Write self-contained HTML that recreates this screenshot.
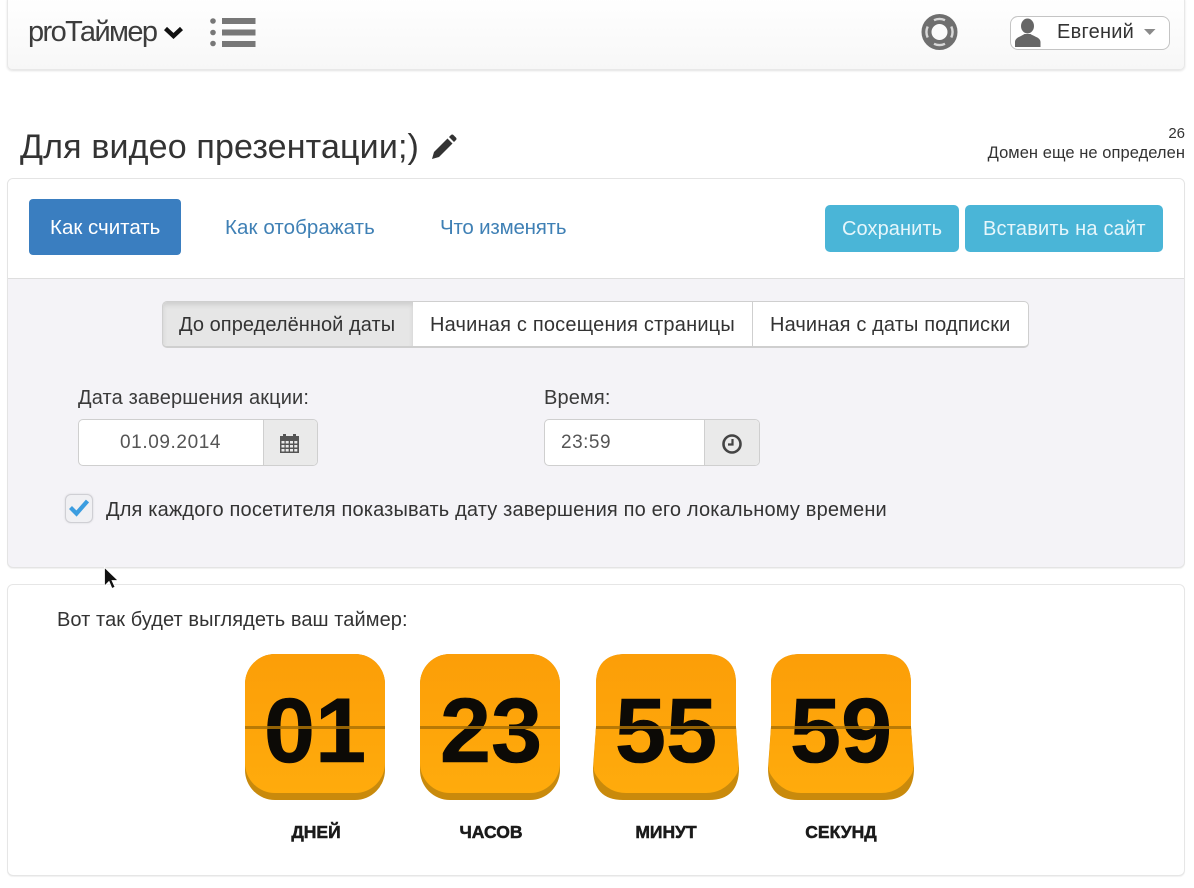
<!DOCTYPE html>
<html lang="ru"><head><meta charset="utf-8"><title>proТаймер</title>
<style>
html,body{margin:0;padding:0;background:#fff}
#p{position:relative;width:1194px;height:888px;overflow:hidden;background:#fff;font-family:"Liberation Sans",sans-serif;color:#333}
#p div,#p span.t,#p svg.a{position:absolute}
.t{position:absolute;white-space:nowrap;line-height:1}
.box{box-sizing:border-box}
</style></head><body><div id="p">

<div class="box" style="left:7px;top:-4px;width:1178px;height:74px;border:1px solid #e8e8e8;border-radius:5px;background:linear-gradient(#fff,#f7f7f7);box-shadow:0 1px 2px rgba(0,0,0,.12)"></div>
<span class="t" style="left:28px;top:18px;font-size:29px;letter-spacing:-1.6px;color:#3c3c3c">proТаймер</span>
<svg class="a" style="left:163px;top:24px" width="21" height="15" viewBox="0 0 21 15"><path d="M2.500 4.500L10.500 12L18.500 4.500" fill="none" stroke="#111" stroke-width="4.400"/></svg>
<svg class="a" style="left:208px;top:16px" width="50" height="33" viewBox="0 0 50 33"><g fill="#777"><circle cx="5" cy="5" r="2.800"/><circle cx="5" cy="16.500" r="2.800"/><circle cx="5" cy="27.500" r="2.800"/><rect x="14" y="2" width="33.500" height="6"/><rect x="14" y="13.500" width="33.500" height="6"/><rect x="14" y="25" width="33.500" height="6"/></g></svg>
<svg class="a" style="left:920px;top:13px" width="40" height="40" viewBox="0 0 40 40"><circle cx="19.500" cy="19" r="13" fill="none" stroke="#6f6f6f" stroke-width="10"/><g fill="none" stroke="#d8d8d8" stroke-width="2.400"><path d="M14 7.200A13 13 0 0 1 25 7.200"/><path d="M14 30.800A13 13 0 0 0 25 30.800"/><path d="M7.700 13.500A13 13 0 0 0 7.700 24.500"/><path d="M31.300 13.500A13 13 0 0 1 31.300 24.500"/></g></svg>
<div class="box" style="left:1010px;top:16px;width:160px;height:34px;border:1px solid #c4c4c4;border-radius:8px;background:#fff"></div>
<svg class="a" style="left:1012px;top:17px" width="32" height="32" viewBox="0 0 32 32"><ellipse cx="15.500" cy="9" rx="6.500" ry="7.500" fill="#666"/><path fill="#666" d="M3 30V25C3 20.500 9 19.500 12.500 17L18.500 17C22 19.500 28.500 20.500 28.500 25V30Z"/></svg>
<span class="t" style="left:1057px;top:22px;font-size:20px;letter-spacing:.25px;color:#333">Евгений</span>
<svg class="a" style="left:1143px;top:28px" width="14" height="8" viewBox="0 0 14 8"><path d="M1 1H12.500L6.750 7z" fill="#8a8a8a"/></svg>

<span class="t" style="left:20px;top:130px;font-size:34px;letter-spacing:.15px;color:#333">Для видео презентации;)</span>
<svg class="a" style="left:430px;top:133px" width="28" height="28" viewBox="0 0 28 28"><path fill="#333" d="M2 26l2-7L17.500 5.500l5 5L9 24zM19 4l2-2c.7-.7 1.700-.7 2.400 0l2.600 2.600c.7.700.7 1.700 0 2.400l-2 2z"/></svg>
<span class="t" style="right:9px;top:126px;font-size:15px">26</span>
<span class="t" style="right:9px;top:145px;font-size:16.500px;letter-spacing:.05px">Домен еще не определен</span>

<div class="box" style="left:7px;top:178px;width:1178px;height:390px;border:1px solid #e4e4e4;border-radius:6px;background:#f4f3f7;box-shadow:0 1px 1px rgba(0,0,0,.06);overflow:hidden">
<div style="left:0;top:0;width:1176px;height:99px;background:#fff;border-bottom:1px solid #dedede"></div></div>

<div class="box" style="left:29px;top:199px;width:152px;height:56px;border-radius:4px;background:#3a7ec0"></div>
<span class="t" style="left:50px;top:218px;font-size:20.500px;color:#fff">Как считать</span>
<span class="t" style="left:225px;top:218px;font-size:20.500px;letter-spacing:.08px;color:#3f80b5">Как отображать</span>
<span class="t" style="left:440px;top:218px;font-size:20.500px;letter-spacing:-.2px;color:#3f80b5">Что изменять</span>
<div class="box" style="left:825px;top:205px;width:134px;height:47px;border-radius:5px;background:#4ab5d7"></div>
<span class="t" style="left:842px;top:219px;font-size:20px;letter-spacing:.08px;color:#e6f6fb">Сохранить</span>
<div class="box" style="left:965px;top:205px;width:198px;height:47px;border-radius:5px;background:#4ab5d7"></div>
<span class="t" style="left:983px;top:219px;font-size:20px;letter-spacing:.2px;color:#e6f6fb">Вставить на сайт</span>

<div class="box" style="left:162px;top:301px;width:867px;height:47px;border:1px solid #cfcfcf;border-radius:5px;background:#fff;overflow:hidden;border-bottom-width:2px">
<div style="left:0;top:0;width:250px;height:45px;background:#e6e6e6;box-shadow:inset 0 3px 5px rgba(0,0,0,.1)"></div>
<div style="left:589px;top:0;width:1px;height:45px;background:#cfcfcf"></div></div>
<span class="t" style="left:179px;top:315px;font-size:20px;letter-spacing:.06px;color:#333">До определённой даты</span>
<span class="t" style="left:430px;top:315px;font-size:20px;letter-spacing:.2px;color:#333">Начиная с посещения страницы</span>
<span class="t" style="left:770px;top:315px;font-size:20px;letter-spacing:.13px;color:#333">Начиная с даты подписки</span>

<span class="t" style="left:78px;top:388px;font-size:20px;letter-spacing:.15px;color:#3a3a3a">Дата завершения акции:</span>
<div class="box" style="left:78px;top:419px;width:240px;height:47px;border:1px solid #cfcfcf;border-radius:5px;background:#fff;overflow:hidden">
<div style="left:184px;top:0;width:54px;height:45px;background:#eaeaea;border-left:1px solid #cfcfcf"></div></div>
<span class="t" style="left:120px;top:433px;font-size:19px;letter-spacing:.6px;color:#555">01.09.2014</span>
<svg class="a" style="left:279px;top:433px" width="21" height="21" viewBox="0 0 21 21"><path fill="#555" d="M1 3h3V1h3v2h7V1h3v2h3v17H1z"/><g fill="#eaeaea"><rect x="2.500" y="8" width="3" height="2.500"/><rect x="6.700" y="8" width="3" height="2.500"/><rect x="11" y="8" width="3" height="2.500"/><rect x="15.300" y="8" width="3" height="2.500"/><rect x="2.500" y="12" width="3" height="2.500"/><rect x="6.700" y="12" width="3" height="2.500"/><rect x="11" y="12" width="3" height="2.500"/><rect x="15.300" y="12" width="3" height="2.500"/><rect x="2.500" y="16" width="3" height="2.500"/><rect x="6.700" y="16" width="3" height="2.500"/><rect x="11" y="16" width="3" height="2.500"/><rect x="15.300" y="16" width="3" height="2.500"/></g></svg>

<span class="t" style="left:544px;top:388px;font-size:20px;letter-spacing:.15px;color:#3a3a3a">Время:</span>
<div class="box" style="left:544px;top:419px;width:216px;height:47px;border:1px solid #cfcfcf;border-radius:5px;background:#fff;overflow:hidden">
<div style="left:159px;top:0;width:55px;height:45px;background:#eaeaea;border-left:1px solid #cfcfcf"></div></div>
<span class="t" style="left:561px;top:433px;font-size:19px;letter-spacing:.5px;color:#555">23:59</span>
<svg class="a" style="left:720px;top:432px" width="24" height="24" viewBox="0 0 24 24"><circle cx="12" cy="12" r="8.500" fill="none" stroke="#444" stroke-width="2.600"/><path d="M12.500 7v5.500H8" fill="none" stroke="#444" stroke-width="2.200"/></svg>

<div class="box" style="left:65px;top:494px;width:28px;height:29px;border:1px solid #cfcfd4;border-radius:6px;background:#f0f0f3;box-shadow:0 0 2px rgba(0,0,0,.12)"></div>
<svg class="a" style="left:67px;top:497px" width="24" height="22" viewBox="0 0 24 22"><path d="M3.500 10.500L9.500 16.500L20.500 4" fill="none" stroke="#3b9de0" stroke-width="4.200"/></svg>
<span class="t" style="left:106px;top:500px;font-size:20px;letter-spacing:.16px;color:#333">Для каждого посетителя показывать дату завершения по его локальному времени</span>

<div class="box" style="left:7px;top:584px;width:1178px;height:292px;border:1px solid #e6e6e6;border-radius:6px;background:#fff;box-shadow:0 1px 1px rgba(0,0,0,.06)"></div>
<span class="t" style="left:57px;top:610px;font-size:20px;letter-spacing:.08px;color:#333">Вот так будет выглядеть ваш таймер:</span>

<svg class="a" style="left:0;top:640px" width="1194" height="220" viewBox="0 640 1194 220">
<defs><linearGradient id="g" x1="0" y1="0" x2="0" y2="1"><stop offset="0" stop-color="#fc9e08"/><stop offset="1" stop-color="#ffab0c"/></linearGradient></defs>
<g font-family="Liberation Sans, sans-serif" font-weight="700">
<rect x="245" y="654" width="140" height="146" rx="30" fill="#c98a0c"/>
<rect x="245" y="654" width="140" height="139" rx="30" fill="url(#g)"/>
<rect x="420" y="654" width="140" height="146" rx="30" fill="#c98a0c"/>
<rect x="420" y="654" width="140" height="139" rx="30" fill="url(#g)"/>
<path fill="#c98a0c" d="M626 654H706Q736 654 736 684V727L739 768Q739 800 709 800H623Q593 800 593 768L596 727V684Q596 654 626 654Z"/>
<path fill="url(#g)" d="M626 654H706Q736 654 736 684V727L738.500 765Q739 772 734 778Q723 793 706 793H626Q609 793 598 778Q593 772 593.500 765L596 727V684Q596 654 626 654Z"/>
<path fill="#c98a0c" d="M801 654H881Q911 654 911 684V727L914 768Q914 800 884 800H798Q768 800 768 768L771 727V684Q771 654 801 654Z"/>
<path fill="url(#g)" d="M801 654H881Q911 654 911 684V727L913.500 765Q914 772 909 778Q898 793 881 793H801Q784 793 773 778Q768 772 768.500 765L771 727V684Q771 654 801 654Z"/>
<g font-size="92" fill="#0c0a06" stroke="#0c0a06" stroke-width=".6" text-anchor="middle">
<text x="315" y="762">01</text>
<text x="491" y="762">23</text>
<text x="666" y="762">55</text>
<text x="841" y="762">59</text>
</g>
<g fill="#ad7205" opacity=".85">
<rect x="245" y="726" width="140" height="3"/><rect x="420" y="726" width="140" height="3"/><rect x="596" y="726" width="140" height="3"/><rect x="771" y="726" width="140" height="3"/>
</g>
<g font-size="17.500" fill="#1a1a1a" stroke="#1a1a1a" stroke-width=".5" text-anchor="middle">
<text x="316" y="838">ДНЕЙ</text>
<text x="491" y="838">ЧАСОВ</text>
<text x="666" y="838">МИНУТ</text>
<text x="841" y="838">СЕКУНД</text>
</g>
</g></svg>

<svg class="a" style="left:102px;top:566px" width="18" height="26" viewBox="0 0 18 26"><path d="M2.500 1.500V20L7 15.500L10 22.500L13 21L10 14.500H16z" fill="#111" stroke="#fff" stroke-width=".8"/></svg>
</div></body></html>
